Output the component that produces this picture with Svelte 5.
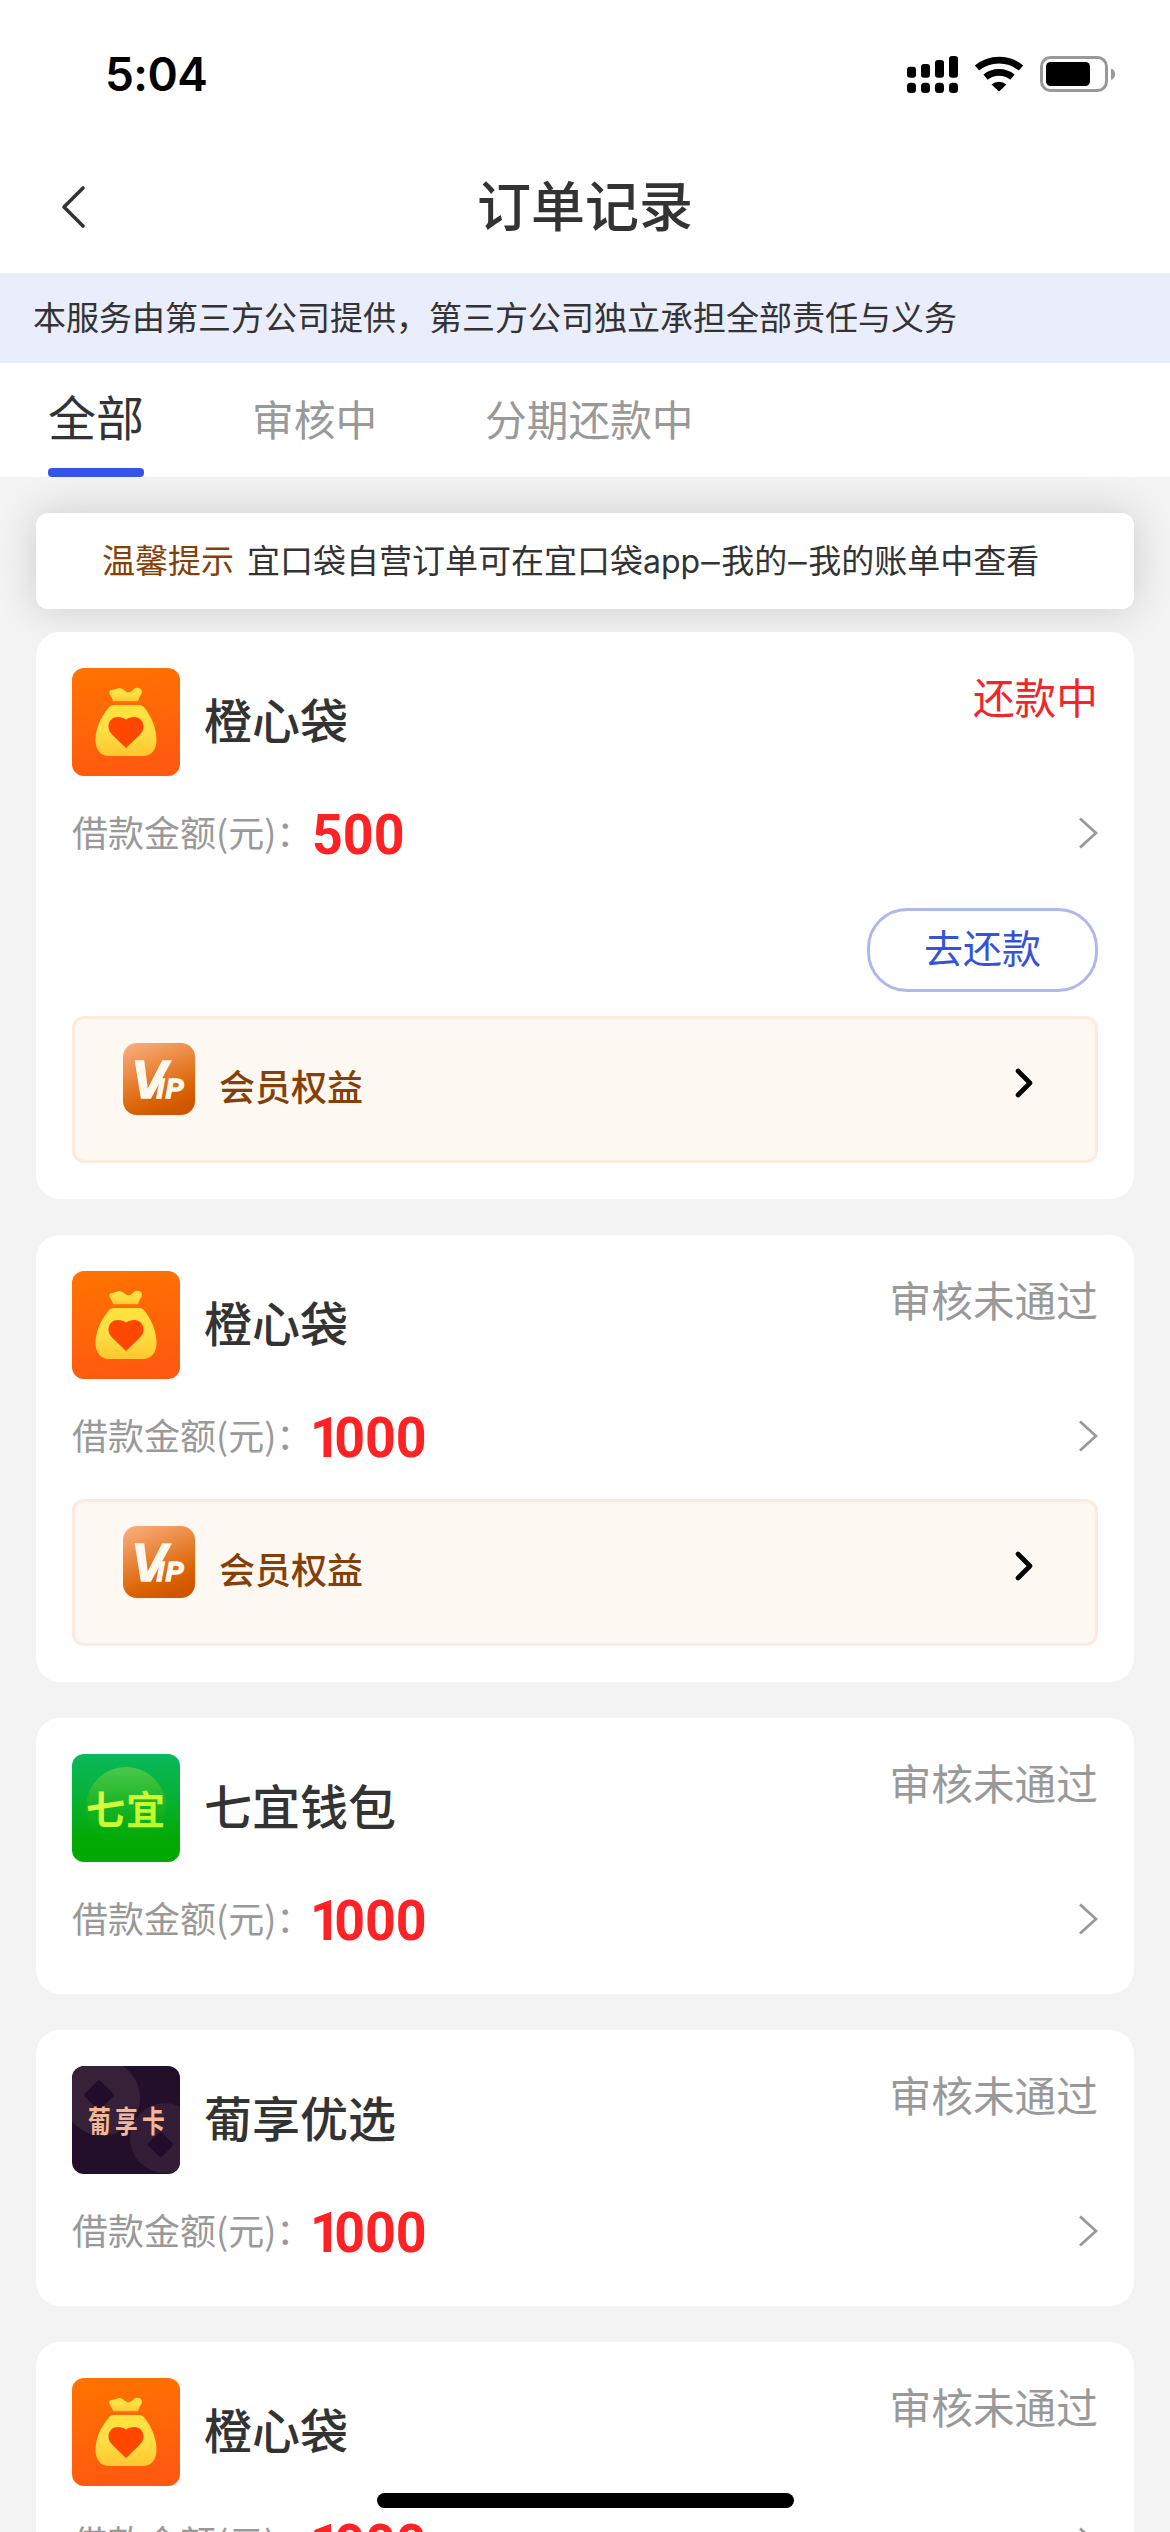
<script>
  const tabs = ['全部', '审核中', '分期还款中'];
  const orders = [
    { name: '橙心袋', logo: 'bag', status: '还款中', active: true, amount: '500', repay: true, vip: true },
    { name: '橙心袋', logo: 'bag', status: '审核未通过', amount: '1000', vip: true },
    { name: '七宜钱包', logo: 'qiyi', status: '审核未通过', amount: '1000' },
    { name: '葡享优选', logo: 'puxiang', status: '审核未通过', amount: '1000' },
    { name: '橙心袋', logo: 'bag', status: '审核未通过', amount: '1000' }
  ];
</script>

{#snippet bagLogo()}
  <svg class="logo" viewBox="0 0 108 108">
    <defs>
      <linearGradient id="bag-bg" x1="0" y1="0" x2="0.2" y2="1">
        <stop offset="0" stop-color="#ff7400" />
        <stop offset="1" stop-color="#ff5a10" />
      </linearGradient>
      <linearGradient id="bag-fill" x1="0" y1="0" x2="0" y2="1">
        <stop offset="0" stop-color="#ffe23c" />
        <stop offset="0.5" stop-color="#fddf45" />
        <stop offset="1" stop-color="#ffc72e" />
      </linearGradient>
    </defs>
    <rect width="108" height="108" fill="url(#bag-bg)" />
    <path fill="url(#bag-fill)" d="M38 22.500c2-1 4-.8 6-1.500 2.500-1.400 5-1.200 7.500.8 2.500 1.900 3.700 3 6 2.400 3-.8 4-4.700 8-4.500 3.500.2 5.500 2.800 4 6-1.500 2.500-2.800 4.500-3.300 7.500H41c-.3-3.500-2.200-4.500-3.200-7-.5-1.200-.6-2.500.2-3.700z" />
    <path fill="url(#bag-fill)" d="M42 37h25c3 0 4.500 1.500 6 3.500C79.500 49 84.500 60 84.500 72c0 9.500-5 16-13.500 16H37c-8.500 0-13.500-6.500-13.500-16 0-12 5.500-23 12.500-31.500 1.500-2 3-3.500 6-3.500z" />
    <path fill="#ff4700" d="M54 80 41 67.500C38 64.500 36.500 62 36.500 58.500c0-5.500 4-9.500 9-9.500 3.500 0 6.500 1 8.500 2.500 2-1.500 5-2.500 8.500-2.500 5 0 9 4 9 9.500 0 3.500-1.500 6-4.500 9z" />
  </svg>
{/snippet}

{#snippet qiyiLogo()}
  <svg class="logo" viewBox="0 0 108 108">
    <defs>
      <linearGradient id="qy-bg" x1="0" y1="0" x2="0" y2="1">
        <stop offset="0" stop-color="#0ab85e" />
        <stop offset="0.5" stop-color="#05b028" />
        <stop offset="0.8" stop-color="#02a902" />
        <stop offset="1" stop-color="#02a802" />
      </linearGradient>
      <linearGradient id="qy-disc" x1="0" y1="0" x2="0" y2="1">
        <stop offset="0" stop-color="#4cc84c" />
        <stop offset="0.45" stop-color="#1cb526" />
        <stop offset="1" stop-color="#02a902" stop-opacity="0" />
      </linearGradient>
      <linearGradient id="qy-text" x1="0" y1="0" x2="1" y2="1">
        <stop offset="0" stop-color="#e9fa4c" />
        <stop offset="1" stop-color="#b4fa20" />
      </linearGradient>
    </defs>
    <rect width="108" height="108" fill="url(#qy-bg)" />
    <circle cx="54" cy="53" r="40" fill="url(#qy-disc)" />
    <text class="qy" x="14" y="70" fill="url(#qy-text)">七宜</text>
  </svg>
{/snippet}

{#snippet puxiangLogo()}
  <svg class="logo" viewBox="0 0 108 108">
    <rect width="108" height="108" fill="#240f2b" />
    <circle cx="30" cy="32" r="38" fill="#372138" />
    <circle cx="93" cy="72" r="35" fill="#341e37" />
    <rect x="16" y="18" width="22" height="22" rx="2" fill="#210d29" transform="rotate(45 27 29)" />
    <rect x="79" y="69" width="19" height="19" rx="2" fill="#210d29" transform="rotate(45 88.500 78.500)" />
    <text class="px" transform="translate(16 65.500) scale(.76 1)" fill="#f3b795">葡享卡</text>
  </svg>
{/snippet}

<main class="screen">
  <header>
    <div class="statusbar">
      <span class="time">5:04</span>
      <svg class="indicators" width="210" height="42" viewBox="907 53 210 42">
        <rect x="907" y="66.700" width="9" height="11" rx="3" />
        <rect x="921" y="64" width="9" height="13.700" rx="3" />
        <rect x="935" y="60" width="9" height="17.700" rx="3" />
        <rect x="949" y="56" width="9" height="21.700" rx="3" />
        <rect x="907" y="82.700" width="9" height="10.300" rx="3.500" />
        <rect x="921" y="82.700" width="9" height="10.300" rx="3.500" />
        <rect x="935" y="82.700" width="9" height="10.300" rx="3.500" />
        <rect x="949" y="82.700" width="9" height="10.300" rx="3.500" />
        <path fill="none" stroke="#000" stroke-width="6.800" d="M977 68a34.500 34.500 0 0 1 44 0M985.500 77.200a21.500 21.500 0 0 1 27 0" />
        <path d="M991.500 84.500a12 12 0 0 1 15 0L999 91.500z" />
        <rect x="1041.500" y="57.500" width="65" height="33" rx="9" fill="none" stroke="#999" stroke-width="3" />
        <rect x="1046" y="62" width="44" height="24" rx="4.500" />
        <path fill="#999" d="M1111 68.500c5.500 2 5.500 9.500 0 11.500z" />
      </svg>
    </div>
    <div class="titlebar">
      <svg class="back" width="30" height="46" viewBox="0 0 30 46"><path d="M24 4 5 23l19 19" /></svg>
      <h1>订单记录</h1>
    </div>
  </header>

  <div class="notice">本服务由第三方公司提供，第三方公司独立承担全部责任与义务</div>

  <nav>
    {#each tabs as tab, i}
      <span class="tab" class:current={i === 0}>{tab}</span>
    {/each}
  </nav>

  <div class="tip"><b>温馨提示</b><span>宜口袋自营订单可在宜口袋<i>app</i><i class="dash">–</i>我的<i class="dash">–</i>我的账单中查看</span></div>

  <section class="orders">
    {#each orders as order}
      <article>
        <div class="top">
          {#if order.logo === 'bag'}
            {@render bagLogo()}
          {:else if order.logo === 'qiyi'}
            {@render qiyiLogo()}
          {:else}
            {@render puxiangLogo()}
          {/if}
          <h2>{order.name}</h2>
          <span class="status" class:active={order.active}>{order.status}</span>
        </div>
        <div class="loan">
          <span class="label">借款金额(元)：</span>
          <strong class:thousand={order.amount.startsWith('1')}>{order.amount}</strong>
          <svg class="more" width="20" height="32" viewBox="0 0 20 32"><path d="M2 1.500 18 16 2 30.500" /></svg>
        </div>
        {#if order.repay}
          <div class="actions"><button>去还款</button></div>
        {/if}
        {#if order.vip}
          <div class="vip">
            <svg class="badge" viewBox="0 0 72 72">
              <defs>
                <linearGradient id="vip-bg" x1="0.2" y1="0" x2="0.6" y2="1">
                  <stop offset="0" stop-color="#f8ab78" />
                  <stop offset="0.75" stop-color="#dc6505" />
                  <stop offset="1" stop-color="#cf5500" />
                </linearGradient>
              </defs>
              <rect width="72" height="72" fill="url(#vip-bg)" />
              <text y="55"><tspan class="v" x="8">V</tspan><tspan class="ip" x="33.500">I</tspan><tspan class="ip" x="42.500">P</tspan></text>
            </svg>
            <span>会员权益</span>
            <svg class="go" width="22" height="34" viewBox="0 0 22 34"><path d="M5 5l12 12L5 29" /></svg>
          </div>
        {/if}
      </article>
    {/each}
  </section>
  <div class="home"></div>
</main>

<style>
  :global(body) { background: #f3f3f3; }
  .screen {
    position: relative;
    width: 1170px;
    height: 2532px;
    overflow: hidden;
    background: #f3f3f3;
    color: #333;
    font-family: "Noto Sans CJK SC", sans-serif;
  }
  header { height: 273px; background: #fff; }
  .statusbar {
    display: flex;
    justify-content: space-between;
    align-items: center;
    height: 148px;
    box-sizing: border-box;
    padding: 0 53px 0 105px;
  }
  .time { font: 600 46px/48px Inter, sans-serif; letter-spacing: -0.6px; color: #000; }
  .titlebar {
    display: grid;
    grid-template-columns: 110px 1fr 110px;
    align-items: center;
    height: 118px;
  }
  .back { margin-left: 59px; }
  .back path { fill: none; stroke: #333; stroke-width: 3.6; stroke-linecap: round; stroke-linejoin: round; }
  h1 { margin: 0; padding-bottom: 6px; font-size: 54px; line-height: 70px; font-weight: 500; text-align: center; }
  .notice {
    height: 90px;
    box-sizing: border-box;
    padding: 21px 0 0 33px;
    background: #eaedfc;
    font-size: 33px;
    line-height: 44px;
    white-space: nowrap;
  }
  nav {
    display: flex;
    gap: 108px;
    height: 114px;
    padding-left: 48px;
    background: #fff;
  }
  .tab {
    box-sizing: border-box;
    height: 114px;
    padding-top: 25px;
    font-size: 41.7px;
    line-height: 60px;
    color: #999;
  }
  .tab.current {
    display: flex;
    flex-direction: column;
    justify-content: space-between;
    padding-top: 22px;
    font-size: 48px;
    color: #333;
  }
  .tab.current::after { content: ""; height: 9px; border-radius: 4px; background: #3553e8; }
  .tip {
    display: flex;
    gap: 13px;
    height: 96px;
    box-sizing: border-box;
    margin: 36px 36px 0;
    padding: 24px 0 0 66px;
    border-radius: 12px;
    background: #fff;
    box-shadow: 0 0 42px rgba(0, 0, 0, 0.16);
    font-size: 33px;
    line-height: 44px;
    white-space: nowrap;
  }
  .tip b { font-weight: 400; color: #854008; }
  .tip i { font-style: normal; font-family: Inter, sans-serif; font-size: 32px; line-height: 1; }
  .tip .dash { display: inline-block; width: 21px; text-align: center; transform: scaleX(1.15); }
  .orders {
    position: relative;
    display: flex;
    flex-direction: column;
    gap: 36px;
    margin: 23px 36px 0;
  }
  article { padding: 36px; border-radius: 24px; background: #fff; }
  .top { display: flex; height: 108px; }
  .logo { width: 108px; height: 108px; border-radius: 12px; flex: none; }
  .qy { font: 700 39px "Noto Sans CJK SC", sans-serif; letter-spacing: 1px; }
  .px { font: 700 30px "Noto Sans CJK SC", sans-serif; letter-spacing: 5.5px; }
  h2 { margin: 0 0 0 24px; font-size: 48px; line-height: 100px; font-weight: 500; }
  .status { margin-left: auto; font-size: 41.7px; line-height: 56px; color: #999; }
  .status.active { color: #f0262a; }
  .loan { display: flex; align-items: center; height: 60px; margin-top: 27px; padding-bottom: 9px; }
  .label { font-size: 36px; line-height: 48px; color: #999; white-space: nowrap; margin-top: -4px; }
  .loan strong {
    margin: 4px 0 0;
    font: 700 56px/60px Roboto, sans-serif;
    color: #ff2224;
    transform: scaleX(0.96);
    transform-origin: left;
  }
  .thousand::first-letter { letter-spacing: -7px; }
  .loan .thousand { margin-left: -2px; }
  .more { margin-left: auto; }
  .more path { fill: none; stroke: #999; stroke-width: 2.8; }
  .actions { display: flex; justify-content: flex-end; margin-top: 36px; }
  button {
    width: 231px;
    height: 84px;
    padding: 0 0 8px;
    border: 3px solid #aeb8ee;
    border-radius: 40px;
    background: #fff;
    color: #3553d9;
    font: 400 39px/50px "Noto Sans CJK SC", sans-serif;
  }
  .vip {
    display: flex;
    box-sizing: border-box;
    height: 147px;
    margin-top: 24px;
    padding: 24px 60px 0 48px;
    border: 3px solid #fde9e0;
    border-radius: 12px;
    background: #fdf8f1;
  }
  .badge { width: 72px; height: 72px; border-radius: 14px; }
  .badge text { fill: #fff8ee; stroke: #fff8ee; stroke-width: 1.4; font-family: "Liberation Sans", sans-serif; font-weight: 700; font-style: italic; }
  .v { font-size: 54px; }
  .ip { font-size: 27px; }
  .vip span { margin: 18px 0 0 24px; font-size: 36px; line-height: 48px; font-weight: 500; color: #844008; }
  .go { margin: 23px 0 0 auto; }
  .go path { fill: none; stroke: #000; stroke-width: 4.6; stroke-linecap: round; stroke-linejoin: round; }
  .home {
    position: absolute;
    left: 377px;
    top: 2493px;
    width: 417px;
    height: 15px;
    border-radius: 8px;
    background: #000;
  }
</style>
